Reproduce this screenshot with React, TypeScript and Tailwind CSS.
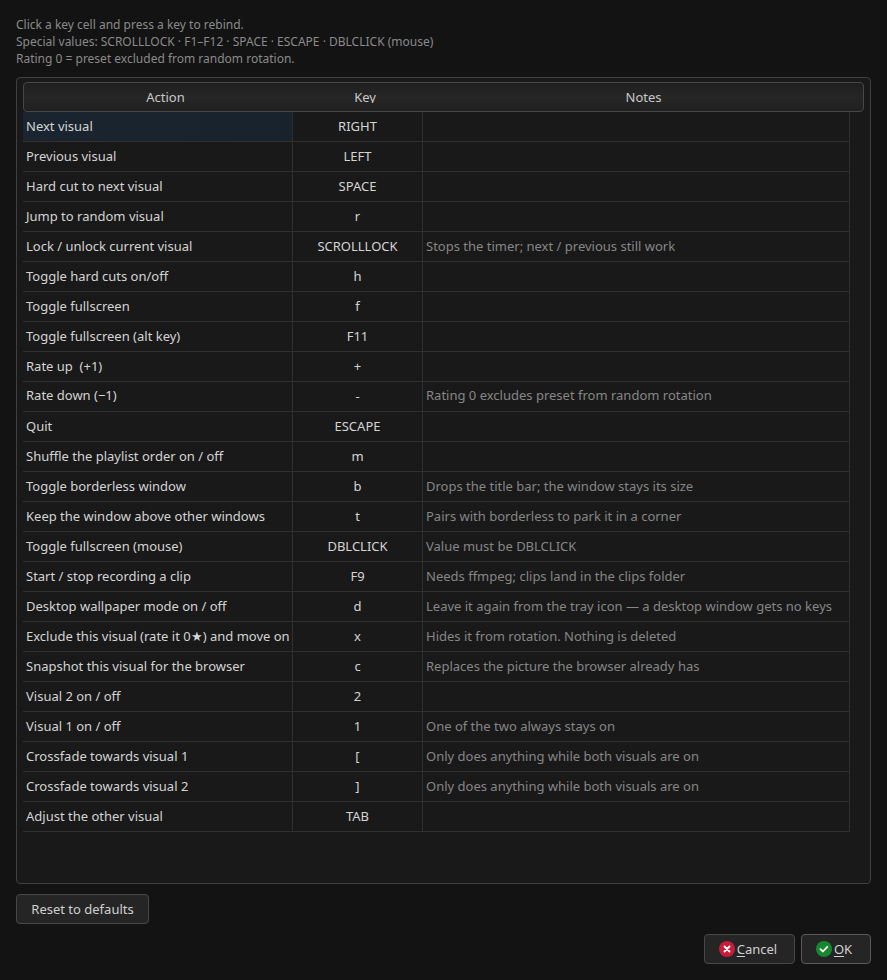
const rows: [string, string, string?][] = [
  ['Next visual', 'RIGHT'],
  ['Previous visual', 'LEFT'],
  ['Hard cut to next visual', 'SPACE'],
  ['Jump to random visual', 'r'],
  ['Lock / unlock current visual', 'SCROLLLOCK', 'Stops the timer; next / previous still work'],
  ['Toggle hard cuts on/off', 'h'],
  ['Toggle fullscreen', 'f'],
  ['Toggle fullscreen (alt key)', 'F11'],
  ['Rate up  (+1)', '+'],
  ['Rate down (−1)', '-', 'Rating 0 excludes preset from random rotation'],
  ['Quit', 'ESCAPE'],
  ['Shuffle the playlist order on / off', 'm'],
  ['Toggle borderless window', 'b', 'Drops the title bar; the window stays its size'],
  ['Keep the window above other windows', 't', 'Pairs with borderless to park it in a corner'],
  ['Toggle fullscreen (mouse)', 'DBLCLICK', 'Value must be DBLCLICK'],
  ['Start / stop recording a clip', 'F9', 'Needs ffmpeg; clips land in the clips folder'],
  ['Desktop wallpaper mode on / off', 'd', 'Leave it again from the tray icon — a desktop window gets no keys'],
  ['Exclude this visual (rate it 0★) and move on', 'x', 'Hides it from rotation. Nothing is deleted'],
  ['Snapshot this visual for the browser', 'c', 'Replaces the picture the browser already has'],
  ['Visual 2 on / off', '2'],
  ['Visual 1 on / off', '1', 'One of the two always stays on'],
  ['Crossfade towards visual 1', '[', 'Only does anything while both visuals are on'],
  ['Crossfade towards visual 2', ']', 'Only does anything while both visuals are on'],
  ['Adjust the other visual', 'TAB'],
]

export default function App() {
  return (
    <div className="w-[887px] h-[980px] bg-[#131313] font-['Noto_Sans',sans-serif] text-[13px] text-[#d4d4d4] px-4 pt-4 flex flex-col overflow-hidden">
      {/* Help text */}
      <div className="text-[12px] leading-[17px] text-[#8a8a8a] h-[51px] mb-[10px]">
        <p>Click a key cell and press a key to rebind.</p>
        <p>Special values: SCROLLLOCK · F1–F12 · SPACE · ESCAPE · DBLCLICK (mouse)</p>
        <p>Rating 0 = preset excluded from random rotation.</p>
      </div>

      {/* Table */}
      <div className="w-[855px] h-[807px] shrink-0 bg-[#191919] border border-[#404040] rounded-[4px] pt-1 pl-[6px] pr-[6px]">
        <div className="grid grid-cols-[283px_116px_1fr] h-[30px] pt-[5px] bg-gradient-to-b from-[#1f1f1f] via-[#262626] to-[#1f1f1f] border border-[#474747] rounded-[4px] text-[#c8c8c8] text-center leading-[18px]">
          <div>Action</div>
          {/* descender of the y is clipped by the header section in the reference */}
          <div className="h-[15px] overflow-hidden">Key</div>
          <div className="pl-[1px]">Notes</div>
        </div>
        <div className="w-[827px]">
          {rows.map(([action, key, notes], i) => (
            <div key={action} className="grid grid-cols-[270px_130px_1fr] h-[30px] border-b border-[#303030]">
              <div className={`px-[3px] flex items-center whitespace-pre border-r border-[#303030] ${i === 0 ? 'bg-gradient-to-r from-[#1a2530] to-[#18222c]' : ''} ${i === 9 ? 'pb-[2px]' : ''}`}>
                {action}
              </div>
              <div className="flex items-center justify-center border-r border-[#303030]">{key}</div>
              <div className={`px-[3px] flex items-center border-r border-[#303030] text-[#868686] whitespace-nowrap ${i === 9 ? 'pb-[1px]' : ''}`}>{notes}</div>
            </div>
          ))}
        </div>
      </div>

      {/* Buttons */}
      <div className="mt-[10px]">
        <button className="w-[133px] h-[30px] pt-[1px] bg-[#252525] border border-[#484848] rounded-[4px] text-[#d0d0d0]">
          Reset to defaults
        </button>
      </div>
      <div className="mt-[10px] flex justify-end gap-[6px]">
        <button className="w-[91px] h-[30px] pr-[3px] bg-[#252525] border border-[#484848] rounded-[4px] flex items-center justify-center gap-[2px] text-[#d0d0d0]">
          <svg width="16" height="16" viewBox="0 0 16 16">
            <circle cx="8" cy="8" r="8" fill="#c41e3a" />
            <path d="M5.5 5.5l5 5M10.5 5.5l-5 5" stroke="#fff" strokeWidth="1.8" strokeLinecap="round" />
          </svg>
          <span className="pt-[1px]"><span className="underline underline-offset-2">C</span>ancel</span>
        </button>
        <button className="w-[70px] h-[30px] pr-[4px] bg-[#252525] border border-[#5a5a5a] rounded-[4px] flex items-center justify-center gap-[2px] text-[#d0d0d0]">
          <svg width="16" height="16" viewBox="0 0 16 16">
            <circle cx="8" cy="8" r="8" fill="#16882f" />
            <path d="M4.5 8.2l2.4 2.3 4.4-4.6" stroke="#fff" strokeWidth="1.8" fill="none" strokeLinecap="round" strokeLinejoin="round" />
          </svg>
          <span className="pt-[1px]"><span className="underline underline-offset-2">O</span>K</span>
        </button>
      </div>
    </div>
  )
}
